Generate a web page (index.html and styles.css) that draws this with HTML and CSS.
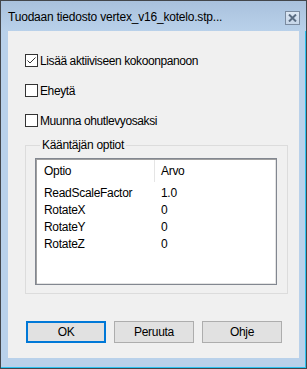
FILE: index.html
```html
<!DOCTYPE html>
<html lang="fi">
<head>
  <meta charset="UTF-8">
  <title>Tuodaan tiedosto</title>
  <link rel="stylesheet" href="styles.css">
</head>
<body>

<div class="window">
  <div class="titlebar">
    <span class="title">Tuodaan tiedosto vertex_v16_kotelo.stp...</span>
    <div class="close-btn">
      <svg width="9" height="8" viewBox="0 0 9 8">
        <path d="M1 0.5 L8 7.5 M8 0.5 L1 7.5" stroke="#5b6d83" stroke-width="2" fill="none"/>
      </svg>
    </div>
  </div>

  <div class="client">
    <!-- options -->
    <div class="checks">
      <label class="check-row">
        <span class="box checked">
          <svg width="11" height="11" viewBox="0 0 11 11">
            <path d="M1.5 5.5 L4 8 L9.5 2.5" stroke="#333" stroke-width="1" fill="none"/>
          </svg>
        </span>
        <span>Lisää aktiiviseen kokoonpanoon</span>
      </label>
      <label class="check-row">
        <span class="box"></span>
        <span>Eheytä</span>
      </label>
      <label class="check-row">
        <span class="box"></span>
        <span>Muunna ohutlevyosaksi</span>
      </label>
    </div>

    <fieldset class="group">
      <legend>Kääntäjän optiot</legend>
      <div class="list">
        <div class="list-head">
          <div class="cell first">Optio</div>
          <div class="cell">Arvo</div>
        </div>
        <div class="list-row">
          <div class="cell first">ReadScaleFactor</div>
          <div class="cell">1.0</div>
        </div>
        <div class="list-row">
          <div class="cell first">RotateX</div>
          <div class="cell">0</div>
        </div>
        <div class="list-row">
          <div class="cell first">RotateY</div>
          <div class="cell">0</div>
        </div>
        <div class="list-row">
          <div class="cell first">RotateZ</div>
          <div class="cell">0</div>
        </div>
      </div>
    </fieldset>

    <div class="buttons">
      <button class="btn default">OK</button>
      <button class="btn">Peruuta</button>
      <button class="btn">Ohje</button>
    </div>
  </div>
</div>

</body>
</html>
```

FILE: styles.css
```css
:root {
  --frame: #b9d1ea;
  --face: #f0f0f0;
  --accent: #0078d7;
}

body {
  margin: 0;
  font-family: 'Liberation Sans', Arial, sans-serif;
  font-size: 12px;
  color: #000;
}

.window {
  width: 307px;
  height: 369px;
  box-sizing: border-box;
  border: 1px solid #43464b;
  padding: 0 7px 10px 7px;
  background: var(--frame);
  box-shadow: inset -1px -1px 0 #2cc2f0;
  display: flex;
  flex-direction: column;
}

.titlebar {
  height: 30px;
  margin: 0 -7px;
  padding: 0 6px 0 7px;
  display: flex;
  align-items: center;
  justify-content: space-between;
  background: linear-gradient(#a9c1dd, #b9d1ea);
}

.title {
  font-size: 12px;
  letter-spacing: -0.2px;
  padding-top: 1px;
}

.close-btn {
  width: 13px;
  height: 12px;
  border: 1px solid #7b8ba0;
  background: linear-gradient(#dce7f3, #c6d6e9);
  display: flex;
  align-items: center;
  justify-content: center;
  margin-top: 3px;
}

.client {
  height: 327px;
  background: var(--face);
  display: flex;
  flex-direction: column;
}

.checks {
  display: flex;
  flex-direction: column;
  gap: 17px;
  padding: 23px 0 0 17px;
}

.check-row {
  display: flex;
  align-items: center;
  gap: 2px;
  height: 13px;
  letter-spacing: -0.4px;
}

.box {
  width: 11px;
  height: 11px;
  border: 1px solid #333;
  background: #fff;
  display: flex;
}

.group {
  margin: 11px 0 0 17px;
  width: 263px;
  box-sizing: border-box;
  border: 1px solid #dcdcdc;
  padding: 6px 10px 8px 9px;
}

.group legend {
  padding: 0 2px;
  margin-left: 5px;
  line-height: 14px;
  letter-spacing: -0.3px;
}

.list {
  height: 127px;
  box-sizing: border-box;
  border: 1px solid #828790;
  box-shadow: inset 1px 1px 0 #a0a0a0, inset -1px -1px 0 #e3e3e3;
  background: #fff;
  padding: 1px;
  letter-spacing: -0.3px;
}

.list-head,
.list-row {
  display: grid;
  grid-template-columns: 118px 1fr;
}

.list-head {
  height: 25px;
}

.list-head .cell {
  line-height: 22px;
}

.list-head .first {
  border-right: 1px solid #e5e5e5;
  height: 22px;
}

.list-row {
  height: 17px;
  line-height: 17px;
}

.cell {
  padding-left: 6px;
}

.cell.first {
  padding-left: 7px;
}

.buttons {
  display: flex;
  gap: 8px;
  padding: 27px 0 0 18px;
}

.btn {
  width: 80px;
  height: 22px;
  box-sizing: border-box;
  border: 1px solid #adadad;
  background: #e1e1e1;
  font-family: 'Liberation Sans', Arial, sans-serif;
  font-size: 12px;
  letter-spacing: -0.3px;
  padding: 0;
  color: #000;
}

.btn.default {
  border: 2px solid var(--accent);
}
```
